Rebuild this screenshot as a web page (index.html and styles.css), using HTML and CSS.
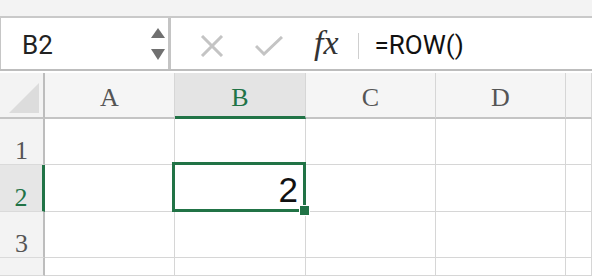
FILE: index.html
```html
<!DOCTYPE html>
<html>
<head>
  <title>Sheet</title>
  <link rel="stylesheet" href="styles.css">
</head>
<body>
  <div class="top-band"></div>

  <div class="toolbar">
    <div class="name-box">
      <span class="name-text">B2</span>
      <div class="spinner">
        <span class="arrow-up"></span>
        <span class="arrow-down"></span>
      </div>
    </div>
    <div class="formula-bar">
      <svg class="icon-cancel" width="24" height="22" viewBox="0 0 24 22">
        <path d="M2 1 L22 21 M22 1 L2 21" stroke="#c4c4c4" stroke-width="3" fill="none"/>
      </svg>
      <svg class="icon-enter" width="28" height="20" viewBox="0 0 28 20">
        <path d="M1 10 L9 18 L27 1" stroke="#c4c4c4" stroke-width="3" fill="none"/>
      </svg>
      <span class="fx">fx</span>
      <span class="divider"></span>
      <span class="formula-text">=ROW()</span>
    </div>
  </div>

  <div class="sheet">
    <!-- header row -->
    <div class="corner"><span class="corner-tri"></span></div>
    <div class="col-head">A</div>
    <div class="col-head active">B</div>
    <div class="col-head">C</div>
    <div class="col-head">D</div>
    <div class="col-head"></div>

    <!-- row 1 -->
    <div class="row-head">1</div>
    <div class="cell"></div>
    <div class="cell"></div>
    <div class="cell"></div>
    <div class="cell"></div>
    <div class="cell"></div>

    <!-- row 2 -->
    <div class="row-head active">2</div>
    <div class="cell"></div>
    <div class="cell num">2</div>
    <div class="cell"></div>
    <div class="cell"></div>
    <div class="cell"></div>

    <!-- row 3 -->
    <div class="row-head">3</div>
    <div class="cell"></div>
    <div class="cell"></div>
    <div class="cell"></div>
    <div class="cell"></div>
    <div class="cell"></div>

    <!-- row 4 -->
    <div class="row-head"></div>
    <div class="cell"></div>
    <div class="cell"></div>
    <div class="cell"></div>
    <div class="cell"></div>
    <div class="cell"></div>

    <!-- selection box over B2 -->
    <div class="selection"><span class="fill-handle"></span></div>
  </div>
</body>
</html>
```

FILE: styles.css
```css
body {
  margin: 0;
  width: 592px;
  height: 276px;
  overflow: hidden;
  background-color: #fff;
  font-family: Roboto, "Liberation Sans", sans-serif;
}

.top-band {
  height: 16px;
  background-color: #f3f3f3;
  border-bottom: 2px solid #c9c9c9;
}

.toolbar {
  display: flex;
  height: 51px;
  border-bottom: 2px solid #bdbdbd;
  margin-bottom: 2px;
}

.name-box {
  display: flex;
  align-items: center;
  justify-content: space-between;
  width: 171px;
  box-sizing: border-box;
  border-left: 1px solid #c6c6c6;
  border-right: 3px solid #c4c4c4;
  padding-left: 21px;
  padding-right: 3px;
}

.name-text {
  font-size: 26px;
  color: #222;
  padding-top: 2px;
}

.spinner {
  display: flex;
  flex-direction: column;
  gap: 11px;
  padding-top: 1px;
}

.arrow-up {
  width: 0;
  height: 0;
  border-left: 7px solid transparent;
  border-right: 7px solid transparent;
  border-bottom: 10px solid #707070;
}

.arrow-down {
  width: 0;
  height: 0;
  border-left: 7px solid transparent;
  border-right: 7px solid transparent;
  border-top: 11px solid #707070;
}

.formula-bar {
  flex: 1;
  display: flex;
  align-items: center;
  padding-left: 29px;
}

.icon-cancel {
  margin-top: 4px;
}

.icon-enter {
  margin-left: 31px;
  margin-top: 4px;
}

.fx {
  font-family: "Liberation Serif", serif;
  font-style: italic;
  font-size: 34px;
  color: #333;
  margin-left: 31px;
  padding-bottom: 2px;
}

.divider {
  width: 1px;
  height: 26px;
  background-color: #cfcfcf;
  margin-left: 19px;
  margin-top: 4px;
}

.formula-text {
  font-size: 26px;
  color: #111;
  margin-left: 16px;
  padding-top: 2px;
}

.sheet {
  position: relative;
  display: grid;
  grid-template-columns: 45px 130px 131px 130px 130px 1fr;
  grid-template-rows: 46px 46px 47px 46px 1fr;
  height: 203px;
}

.corner {
  position: relative;
  background-color: #f3f3f3;
  border-right: 2px solid #bdbdbd;
  border-bottom: 2px solid #c4c4c4;
}

.corner-tri {
  position: absolute;
  right: 4px;
  bottom: 4px;
  width: 0;
  height: 0;
  border-left: 30px solid transparent;
  border-bottom: 30px solid #dcdcdc;
}

.col-head {
  display: flex;
  align-items: center;
  justify-content: center;
  padding-top: 6px;
  font-family: "Liberation Serif", serif;
  font-size: 26px;
  line-height: 1;
  color: #555;
  background-color: #f5f5f5;
  border-right: 1px solid #d6d6d6;
  border-bottom: 2px solid #c4c4c4;
  box-sizing: border-box;
}

.col-head.active {
  background-color: #e4e4e4;
  color: #217346;
  border-bottom: 3px solid #217346;
}

.row-head {
  display: flex;
  align-items: flex-end;
  justify-content: center;
  font-family: "Liberation Serif", serif;
  font-size: 26px;
  line-height: 1;
  color: #555;
  background-color: #f3f3f3;
  border-right: 2px solid #bdbdbd;
  border-bottom: 1px solid #dadada;
  box-sizing: border-box;
}

.row-head.active {
  background-color: #e6e6e6;
  color: #217346;
  border-right: 3px solid #217346;
}

.cell {
  border-right: 1px solid #d6d6d6;
  border-bottom: 1px solid #d6d6d6;
  box-sizing: border-box;
}

.num {
  display: flex;
  align-items: flex-end;
  justify-content: flex-end;
  font-family: "Liberation Sans", sans-serif;
  font-size: 35px;
  line-height: 1;
  color: #111;
  padding-right: 7px;
  padding-bottom: 4px;
}

.selection {
  position: absolute;
  left: 172px;
  top: 89px;
  width: 134px;
  height: 50px;
  box-sizing: border-box;
  border: 3px solid #217346;
}

.fill-handle {
  position: absolute;
  right: -7px;
  bottom: -7px;
  width: 9px;
  height: 9px;
  background-color: #217346;
  border: 1px solid #fff;
}
```
